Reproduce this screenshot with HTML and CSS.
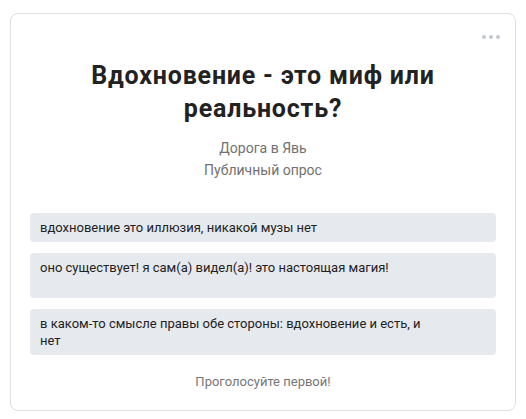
FILE: index.html
```html
<!DOCTYPE html>
<html lang="ru">
<head>
<meta charset="utf-8">
<link rel="stylesheet" href="styles.css">
</head>
<body>
<div class="card">
  <div class="menu" aria-label="Ещё">
    <svg width="18" height="4" viewBox="0 0 18 4"><circle cx="2" cy="2" r="2"/><circle cx="9" cy="2" r="2"/><circle cx="16" cy="2" r="2"/></svg>
  </div>
  <h1 class="title">Вдохновение - это миф или реальность?</h1>
  <div class="meta">
    <div>Дорога в Явь</div>
    <div>Публичный опрос</div>
  </div>
  <div class="options">
    <div class="option">вдохновение это иллюзия, никакой музы нет</div>
    <div class="option option--tall">оно существует! я сам(а) видел(а)! это настоящая магия!</div>
    <div class="option">в каком-то смысле правы обе стороны: вдохновение и есть, и нет</div>
  </div>
  <div class="footer">Проголосуйте первой!</div>
</div>
</body>
</html>
```
FILE: styles.css
```css
html, body {
  margin: 0;
  padding: 0;
  background: #fff;
}
body {
  padding: 13px 10px 0 10px;
  font-family: Roboto, "Noto Sans", sans-serif;
}
.card {
  position: relative;
  box-sizing: border-box;
  width: 506px;
  height: 398px;
  border: 1px solid #dce1e6;
  border-radius: 8px;
  padding: 45px 19px 0 19px;
}
.menu {
  position: absolute;
  top: 20px;
  right: 15px;
  line-height: 0;
}
.menu svg {
  fill: #c2c8d0;
}
.title {
  margin: 0 auto;
  width: 440px;
  text-align: center;
  font-size: 25px;
  letter-spacing: 0.8px;
  font-weight: 700;
  line-height: 33px;
  color: #222;
}
.meta {
  margin-top: 12px;
  text-align: center;
  font-size: 14px;
  line-height: 22px;
  color: #717171;
}
.options {
  margin-top: 32px;
  display: flex;
  flex-direction: column;
  gap: 11px;
}
.option {
  background: #e6e9ee;
  border-radius: 4px;
  padding: 6px 60px 6px 10px;
  font-size: 13px;
  line-height: 17px;
  color: #222;
}
.option--tall {
  min-height: 33px;
}
.footer {
  margin-top: 18px;
  text-align: center;
  font-size: 13px;
  line-height: 17px;
  color: #777;
}
```
